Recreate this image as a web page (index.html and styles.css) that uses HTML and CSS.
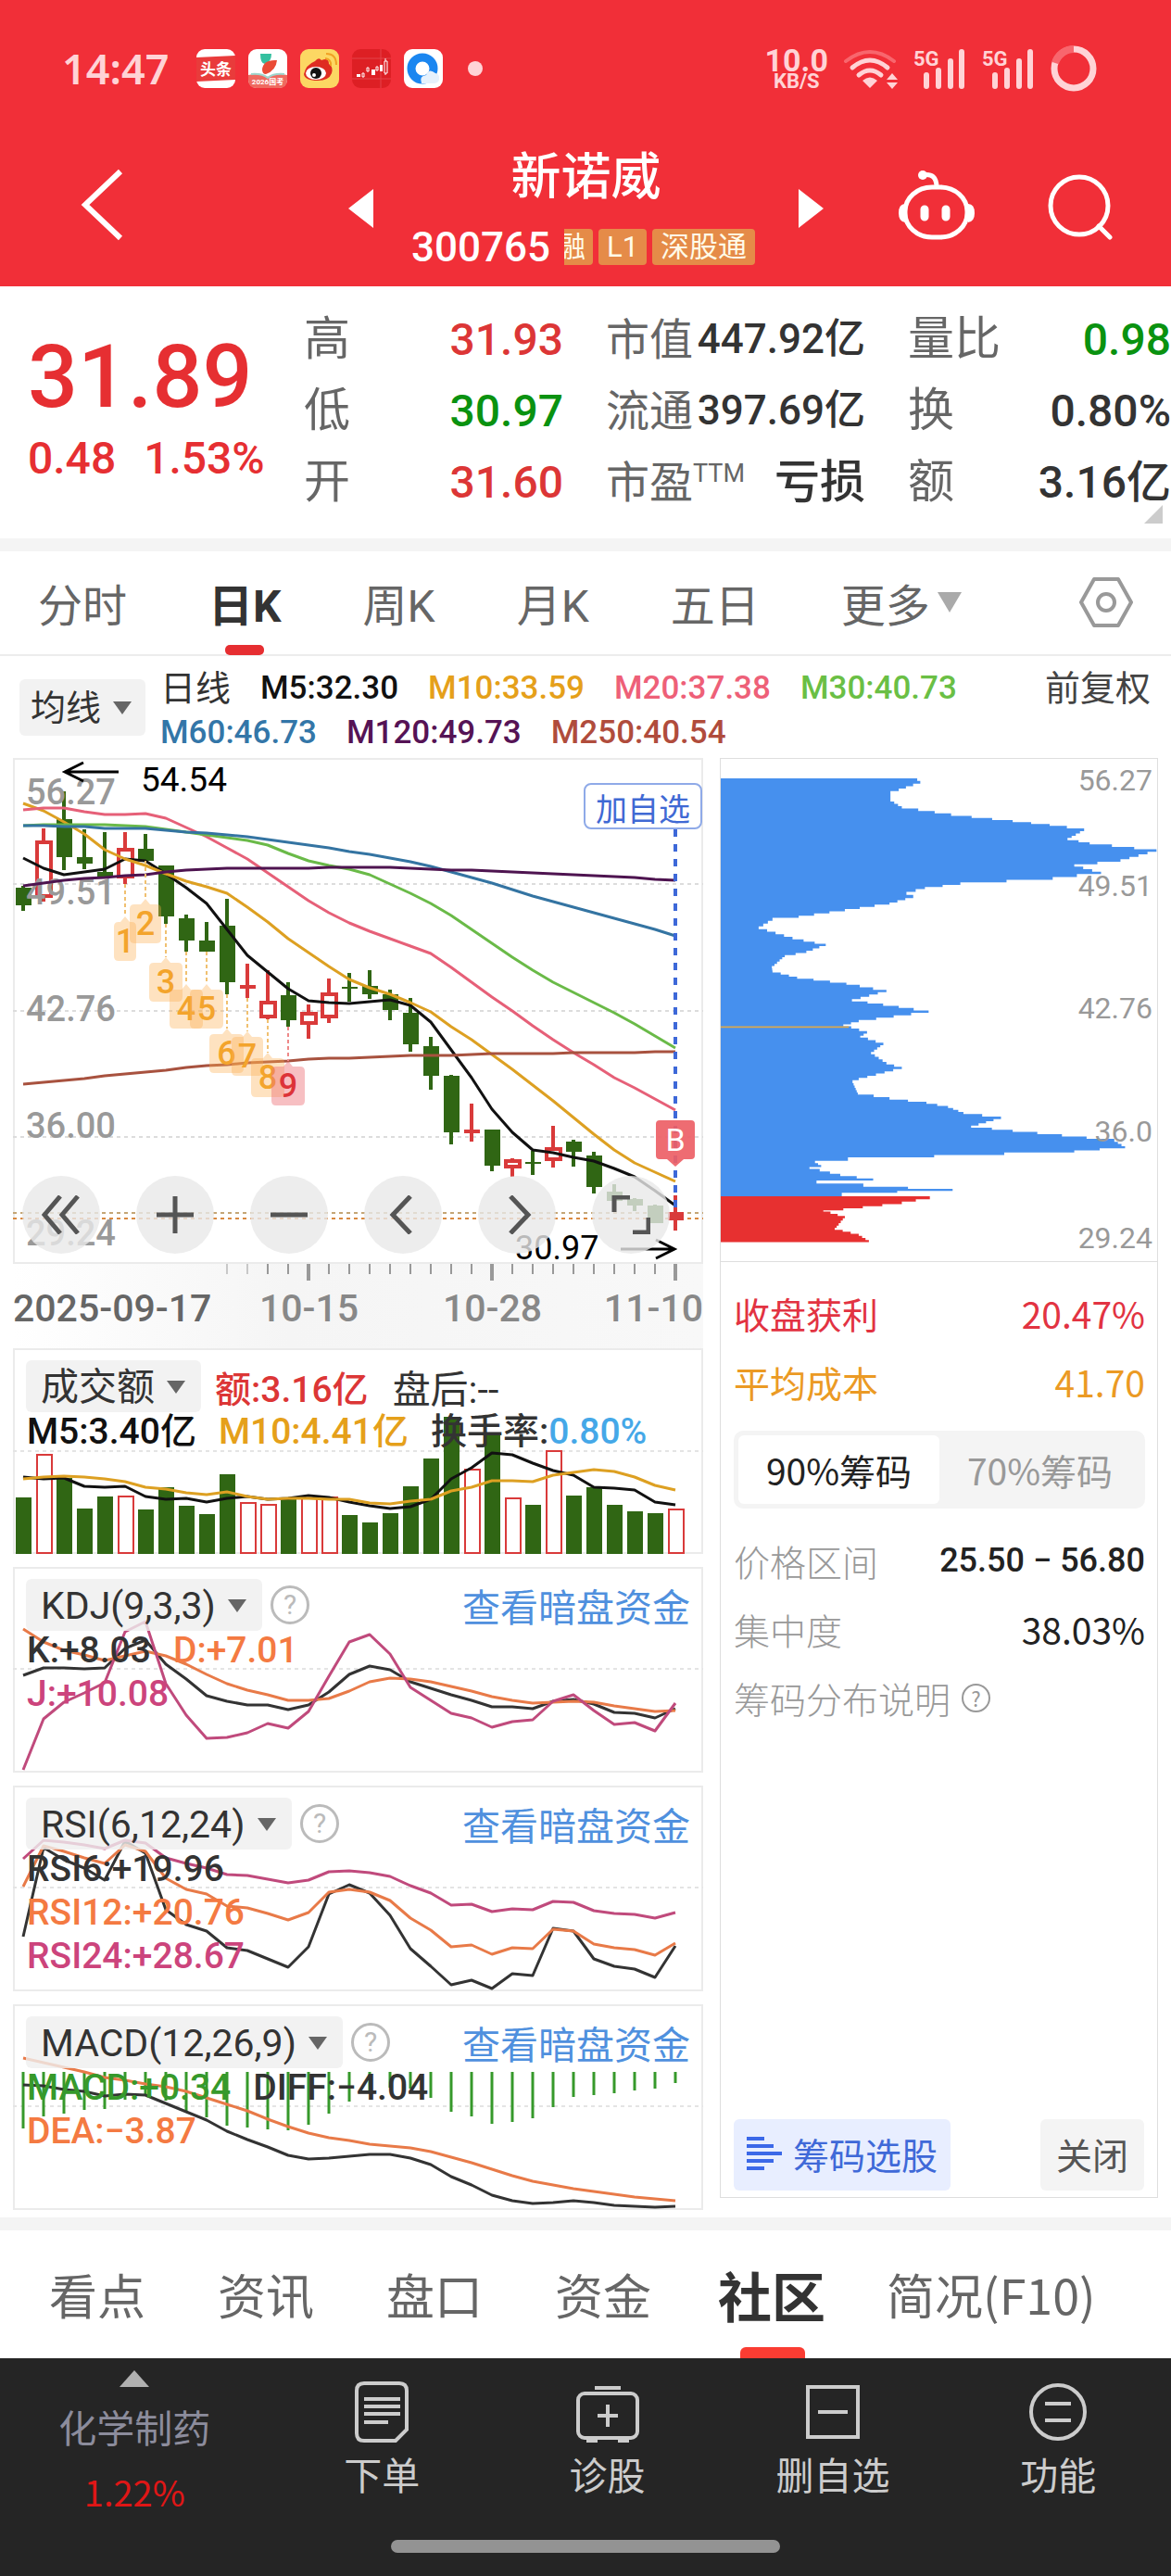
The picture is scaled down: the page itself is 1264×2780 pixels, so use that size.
FILE: index.html
```html
<!DOCTYPE html>
<html lang="zh-CN">
<head>
<meta charset="utf-8">
<meta name="viewport" content="width=device-width">
<title>新诺威 300765</title>
<link rel="stylesheet" href="styles.css">
</head>
<body>
<header class="top">
  <div class="status">
    <span class="clock">14:47</span>
    <div class="apps">
      <svg class="app" viewBox="0 0 42 42"><rect width="42" height="42" rx="9" fill="#fff"/><path d="M0 9l42-2v26l-42 2z" fill="#e93b3b"/><text x="21" y="28" font-size="17" font-weight="700" text-anchor="middle" fill="#fff">头条</text></svg>
      <svg class="app" viewBox="0 0 42 42"><rect width="42" height="42" rx="9" fill="#fff"/><path d="M0 28q12-3 21 2q9-5 21-2v5q0 9-9 9h-24q-9 0-9-9z" fill="#ef6a60"/><path d="M3 27q12-1 18 4q6-5 18-4" fill="none" stroke="#9ed5cc" stroke-width="2"/><path d="M13 5h12q0 9-7 11q-5 0-5-11z" fill="#35c0a0"/><path d="M15 22q1-11 16-10q-1 11-12 15q-4 0-4-5z" fill="#ea4b35"/><text x="21" y="38" font-size="8" font-weight="700" text-anchor="middle" fill="#fff">2026国考</text></svg>
      <svg class="app" viewBox="0 0 42 42"><rect width="42" height="42" rx="9" fill="#fcd763"/><path d="M4 27q2-10 12-14q4-5 7-1q8-3 8 4q5 3 3 10q-3 8-15 8q-14 0-15-7z" fill="#df2c22"/><ellipse cx="17" cy="26" rx="11" ry="7" fill="#fff"/><circle cx="17" cy="26" r="6" fill="#111"/><circle cx="15" cy="28" r="2" fill="#fff"/><path d="M27 10q7 1 6 8M28 5q11 0 11 12" fill="none" stroke="#f0a024" stroke-width="2"/></svg>
      <svg class="app" viewBox="0 0 42 42"><rect width="42" height="42" rx="9" fill="#dd1f24"/><path d="M0 10h42M0 32h42M31 0v42" stroke="#e5454a" stroke-width="1"/><path d="M5 27h4v3h-4zM21 22h4v6h-4zM30 17h3v7h-3z" fill="#fff"/><path d="M11 26h2v4h-2zM16 20h2v4h-2zM26 19h2v4h-2zM35 13h3v13h-3zM36 10v3M36 26v2" fill="none" stroke="#fff" stroke-width="1"/></svg>
      <svg class="app" viewBox="0 0 42 42"><rect width="42" height="42" rx="9" fill="#fff"/><circle cx="20" cy="21" r="12" fill="none" stroke="#1b86f0" stroke-width="9"/><path d="M19 37q-3-8 5-9q3-8 10-2q5 1 4 7q-1 4-6 4z" fill="#e6f1fc"/></svg>
      <i class="more-dot"></i>
    </div>
    <div class="net"><b>10.0</b><small>KB/S</small></div>
    <svg class="wifi" viewBox="0 0 60 44"><g fill="none" stroke="#ffd3d6" stroke-width="5" stroke-linecap="round"><path d="M3 14q26-20 52 0" stroke="#f8666d" stroke-width="4"/><path d="M10 21q19-16 38 0M17 29q12-10 24 0"/></g><path d="M21 35q8-7 16 0l-8 8zM47 34l6-7 6 7zM47 37l6 7 6-7z" fill="#ffd3d6"/></svg>
    <svg class="signal" viewBox="0 0 56 44"><text x="0" y="19" font-size="22" font-weight="700" fill="#ffd3d6">5G</text><path d="M14 29v12M27 24v17M40 14v27M52 4v37" stroke="#ffd3d6" stroke-width="6" stroke-linecap="round"/></svg>
    <svg class="signal" viewBox="0 0 56 44"><text x="0" y="19" font-size="22" font-weight="700" fill="#ffd3d6">5G</text><path d="M14 29v12M27 24v17M40 14v27M52 4v37" stroke="#ffd3d6" stroke-width="6" stroke-linecap="round"/></svg>
    <svg class="battery" viewBox="0 0 50 50"><circle cx="25" cy="25" r="21" fill="none" stroke="#ffd3d6" stroke-width="7"/><path d="M5 19a21 21 0 0 1 20-15" fill="none" stroke="#f8666d" stroke-width="8"/></svg>
  </div>
  <div class="appbar">
    <button class="icon-btn back" aria-label="返回"><svg viewBox="0 0 50 80"><path d="M44 4L6 40l38 36" fill="none" stroke="#fff" stroke-width="6"/></svg></button>
    <button class="icon-btn step" aria-label="上一只"><svg viewBox="0 0 28 42"><path d="M27 0v42L0 21z" fill="#fff"/></svg></button>
    <div class="title">
      <h1>新诺威</h1>
      <div class="code"><span>300765</span><i class="tag cut">融</i><i class="tag">L1</i><i class="tag">深股通</i></div>
    </div>
    <button class="icon-btn step" aria-label="下一只"><svg viewBox="0 0 28 42"><path d="M1 0v42l27-21z" fill="#fff"/></svg></button>
    <button class="icon-btn robot" aria-label="助手"><svg viewBox="0 0 84 78"><g fill="none" stroke="#fff" stroke-width="5"><rect x="8" y="19" width="67" height="54" rx="29" ry="26"/><path d="M27 6q15-3 15 13"/></g><circle cx="27" cy="6" r="5" fill="#fff"/><path d="M8 37q-7 0-7 10q0 9 7 10zM76 37q7 0 7 10q0 9-7 10z" fill="#fff"/><path d="M29 43v8M52 43v8" stroke="#fff" stroke-width="9" stroke-linecap="round"/></svg></button>
    <button class="icon-btn find" aria-label="搜索"><svg viewBox="0 0 72 72"><circle cx="35" cy="35" r="31" fill="none" stroke="#fff" stroke-width="5"/><path d="M56 57l12 12" stroke="#fff" stroke-width="5" stroke-linecap="round"/></svg></button>
  </div>
</header>

<section class="quote">
  <div class="last"><strong>31.89</strong><p><span>0.48</span><span>1.53%</span></p></div>
  <dl><div><dt>高</dt><dd class="up">31.93</dd></div><div><dt>低</dt><dd class="down">30.97</dd></div><div><dt>开</dt><dd class="up">31.60</dd></div></dl>
  <dl class="tight"><div><dt>市值</dt><dd>447.92亿</dd></div><div><dt>流通</dt><dd>397.69亿</dd></div><div><dt>市盈<sup>TTM</sup></dt><dd class="loss">亏损</dd></div></dl>
  <dl><div><dt>量比</dt><dd class="down">0.98</dd></div><div><dt>换</dt><dd>0.80%</dd></div><div><dt>额</dt><dd class="amount">3.16亿</dd></div></dl>
  <svg class="fold" viewBox="0 0 20 20"><path d="M20 0v20H0z" fill="#ccc"/></svg>
</section>

<nav class="periods">
  <button>分时</button><button class="on">日K</button><button>周K</button><button>月K</button><button>五日</button><button aria-haspopup="true">更多<svg class="tri" viewBox="0 0 26 22"><path d="M0 0h26L13 22z" fill="#aaa"/></svg></button>
  <button class="gear" aria-label="设置"><svg viewBox="0 0 58 54"><path d="M16 2h26l14 25-14 25H16L2 27z" fill="none" stroke="#999" stroke-width="4" stroke-linejoin="round"/><circle cx="29" cy="27" r="9" fill="none" stroke="#999" stroke-width="4"/></svg></button>
</nav>

<section class="legend">
  <label class="pick"><select aria-label="均线"><option>均线</option></select><svg class="arrow" viewBox="0 0 20 14"><path d="M0 0h20L10 14z"/></svg></label>
  <div class="ma">
    <p><span class="kind">日线</span><span class="k">M5:32.30</span><span class="o">M10:33.59</span><span class="p">M20:37.38</span><span class="g">M30:40.73</span></p>
    <p><span class="b">M60:46.73</span><span class="v">M120:49.73</span><span class="r">M250:40.54</span></p>
  </div>
  <span class="adjust">前复权</span>
</section>

<main class="board">
  <div class="charts">
    <div class="panel kline">
      <svg id="kline" viewBox="14 818 745 546"></svg>
      <button class="add">加自选</button>
      <div class="tools">
        <button aria-label="最早"><svg viewBox="0 0 42 42"><path d="M20 1L3 21l17 20M39 1L22 21l17 20"/></svg></button>
        <button aria-label="放大"><svg viewBox="0 0 42 42"><path d="M21 1v40M1 21h40"/></svg></button>
        <button aria-label="缩小"><svg viewBox="0 0 42 42"><path d="M1 21h40"/></svg></button>
        <button aria-label="左移"><svg viewBox="0 0 42 42"><path d="M29 1L10 21l19 20"/></svg></button>
        <button aria-label="右移"><svg viewBox="0 0 42 42"><path d="M14 1l19 20-19 20"/></svg></button>
        <button aria-label="全屏"><svg viewBox="0 0 42 42"><path d="M3 18V2h17M40 24v16H23"/></svg></button>
      </div>
    </div>
    <div class="axis">
      <svg id="ticks" viewBox="14 1364 745 20"></svg>
      <p><span>2025-09-17</span><span>10-15</span><span>10-28</span><span>11-10</span></p>
    </div>
    <div class="panel">
      <svg id="volume" viewBox="14 1455 745 222"></svg>
      <div class="info">
        <div class="head"><label class="pick"><select aria-label="成交额"><option>成交额</option></select><svg class="arrow" viewBox="0 0 20 14"><path d="M0 0h20L10 14z"/></svg></label><span class="up">额:3.16亿</span><span class="after">盘后:--</span></div>
        <p><span class="k">M5:3.40亿</span><span class="o">M10:4.41亿</span><span>换手率:<span class="sky">0.80%</span></span></p>
      </div>
    </div>
    <div class="panel">
      <svg id="kdj" viewBox="14 1692 745 222"></svg>
      <div class="info">
        <div class="head"><label class="pick"><select aria-label="KDJ"><option>KDJ(9,3,3)</option></select><svg class="arrow" viewBox="0 0 20 14"><path d="M0 0h20L10 14z"/></svg></label><button class="help" aria-label="说明">?</button><a href="#funds">查看暗盘资金</a></div>
        <p><span>K:+8.03</span><span class="d">D:+7.01</span></p>
        <p><span class="m">J:+10.08</span></p>
      </div>
    </div>
    <div class="panel">
      <svg id="rsi" viewBox="14 1928 745 222"></svg>
      <div class="info">
        <div class="head"><label class="pick"><select aria-label="RSI"><option>RSI(6,12,24)</option></select><svg class="arrow" viewBox="0 0 20 14"><path d="M0 0h20L10 14z"/></svg></label><button class="help" aria-label="说明">?</button><a href="#funds">查看暗盘资金</a></div>
        <p><span>RSI6:+19.96</span></p>
        <p><span class="d">RSI12:+20.76</span></p>
        <p><span class="m">RSI24:+28.67</span></p>
      </div>
    </div>
    <div class="panel">
      <svg id="macd" viewBox="14 2164 745 222"></svg>
      <div class="info">
        <div class="head"><label class="pick"><select aria-label="MACD"><option>MACD(12,26,9)</option></select><svg class="arrow" viewBox="0 0 20 14"><path d="M0 0h20L10 14z"/></svg></label><button class="help" aria-label="说明">?</button><a href="#funds">查看暗盘资金</a></div>
        <p><span class="gr">MACD:+0.34</span><span>DIFF:−4.04</span></p>
        <p><span class="d">DEA:−3.87</span></p>
      </div>
    </div>
  </div>

  <aside class="chips">
    <div class="spread">
      <svg id="spread" viewBox="52 265 1417 1216" preserveAspectRatio="none"></svg>
      <div class="scale"><span>56.27</span><span>49.51</span><span>42.76</span><span>36.0</span><span>29.24</span></div>
    </div>
    <div class="stats">
      <div class="row gain"><span>收盘获利</span><span>20.47%</span></div>
      <div class="row cost"><span>平均成本</span><span>41.70</span></div>
      <div class="seg"><button aria-pressed="true">90%筹码</button><button aria-pressed="false">70%筹码</button></div>
      <div class="row"><span>价格区间</span><b class="range">25.50 − 56.80</b></div>
      <div class="row"><span>集中度</span><b>38.03%</b></div>
      <div class="row note"><span>筹码分布说明</span><button class="help" aria-label="说明">?</button></div>
    </div>
    <div class="acts">
      <button class="select"><svg viewBox="0 0 38 38"><path d="M0 3h19M0 11h29M0 19h38M0 27h29M0 35h19" stroke="#3b68e8" stroke-width="4"/></svg>筹码选股</button>
      <button class="shut">关闭</button>
    </div>
  </aside>
</main>

<nav class="sections">
  <a href="#view">看点</a><a href="#news">资讯</a><a href="#order">盘口</a><a href="#funds">资金</a><a href="#talk" class="on">社区</a><a href="#f10">简况(F10)</a>
</nav>

<footer class="dock">
  <nav>
    <button class="sector"><svg viewBox="0 0 32 18"><path d="M16 0l16 18H0z" fill="#b0b0b0"/></svg><span>化学制药</span><b>1.22%</b></button>
    <button><svg viewBox="0 0 68 66"><path d="M15 2h38q8 0 8 8v42L49 64H15q-8 0-8-8V10q0-8 8-8z"/><path d="M15 19h39M15 27h39M15 35h39M15 44h26"/></svg>下单</button>
    <button><svg viewBox="0 0 68 66"><rect x="2" y="13" width="64" height="48" rx="7"/><path d="M20 7h28M34 25v24M23 37h22M11 64h12M45 64h12"/></svg>诊股</button>
    <button><svg viewBox="0 0 68 66"><path d="M7 6h54v54H7zM18 33h32"/></svg>删自选</button>
    <button><svg viewBox="0 0 68 66"><circle cx="34" cy="33" r="29"/><path d="M20 24h28M20 42h28"/></svg>功能</button>
  </nav>
  <i class="home"></i>
</footer>
<script src="charts.js"></script>
</body>
</html>
```
FILE: styles.css
```css
* { box-sizing: border-box; margin: 0; padding: 0; }
body { font-family: Roboto, "Noto Sans CJK SC", sans-serif; color: #333; background: #fff; }
button, select { font: inherit; color: inherit; border: 0; background: none; appearance: none; white-space: nowrap; }
a { color: inherit; text-decoration: none; }
i { font-style: normal; }
svg { display: block; flex: none; }

.top { background: #f12f38; height: 309px; color: #fff; }
.status { display: flex; align-items: center; padding: 48px 80px 0 67px; height: 100px; color: #ffd3d6; }
.clock { font: 600 45px/52px "Noto Sans", sans-serif; width: 145px; }
.apps { display: flex; align-items: center; gap: 14px; margin-right: auto; }
.app { width: 42px; height: 42px; }
.more-dot { width: 16px; height: 16px; border-radius: 50%; background: #ffd3d6; margin-left: 13px; }
.net { display: grid; justify-items: center; margin-right: 16px; }
.net b { font-size: 34px; line-height: 28px; }
.net small { font-size: 22px; line-height: 18px; font-weight: 700; }
.wifi { width: 60px; height: 44px; margin-right: 16px; }
.signal { width: 56px; height: 44px; margin-right: 18px; overflow: visible; }
.battery { width: 50px; height: 50px; }

.appbar { display: flex; align-items: flex-start; padding: 0 62px 0 86px; }
.icon-btn svg { width: 100%; }
.back { width: 50px; margin: 81px 240px 0 0; }
.step { width: 28px; margin-top: 104px; }
.title { flex: 1; display: grid; justify-items: center; padding-top: 62px; }
h1 { font-size: 54px; line-height: 60px; font-weight: 500; }
.code { display: flex; align-items: center; font-size: 44px; font-weight: 500; height: 39px; margin-top: 25px; }
.code span { margin-right: 15px; }
.tag { background: #e58b48; color: #fffbe8; font-size: 31px; line-height: 39px; font-weight: 400; padding: 0 9px; border-radius: 4px; margin-right: 6px; }
.cut { width: 31px; padding: 0 8px 0 0; display: flex; justify-content: flex-end; overflow: hidden; border-radius: 0 4px 4px 0; }
.robot { width: 84px; margin: 83px 0 0 80px; }
.find { width: 72px; margin: 87px 0 0 77px; }

.quote { display: grid; grid-template-columns: 252fr 280fr 280fr 284fr; column-gap: 46px; padding: 19px 0 22px 30px; border-bottom: 14px solid #f4f4f4; position: relative; font-weight: 500; }
.quote > * { min-width: 0; }
.last { color: #e62f32; padding-top: 31px; white-space: nowrap; }
.last strong { display: block; font-size: 95px; line-height: 96px; font-weight: 500; }
.last p { display: flex; gap: 30px; font-size: 48px; line-height: 60px; margin-top: 10px; }
.quote dl div { display: flex; justify-content: space-between; align-items: center; height: 77px; font-size: 48px; line-height: 77px; white-space: nowrap; }
dt { color: #666; font-weight: 400; font-size: 50px; }
dt sup { font-size: 27px; line-height: 1px; }
.up { color: #dc3636; }
.down { color: #0a9210; }
.tight dt { font-size: 47px; }
.tight dd { font-size: 44px; }
.tight .loss { font-size: 49px; }
.fold { position: absolute; right: 9px; bottom: 16px; width: 20px; }

.periods { display: flex; align-items: center; gap: 88px; height: 113px; padding: 0 41px; border-bottom: 2px solid #ececec; font-size: 48px; color: #666; }
.periods button { height: 108px; padding-bottom: 1px; display: flex; align-items: center; position: relative; }
.periods .on, .sections .on { color: #333; font-weight: 700; }
.periods .on::after { content: ""; position: absolute; left: 18px; bottom: -2px; width: 42px; height: 11px; border-radius: 5px; background: #e62e31; }
.tri { width: 26px; margin-left: 8px; }
.gear { margin-left: auto; }
.gear svg { width: 58px; }

.legend { display: flex; padding: 11px 22px 0 21px; height: 110px; }
.pick { display: flex; align-items: center; background: rgba(239, 239, 239, .8); border-radius: 6px; color: #333; }
.arrow { width: 20px; fill: #666; }
.legend .pick { height: 61px; margin-top: 14px; padding: 0 15px 0 12px; font-size: 38px; gap: 12px; }
.ma { margin-left: 16px; font-size: 35px; font-weight: 500; }
.ma p { display: flex; gap: 32px; line-height: 48px; white-space: nowrap; }
.ma .kind { font-weight: 400; font-size: 38px; }
.adjust { margin-left: auto; font-size: 38px; line-height: 48px; color: #444; }
.k { color: #111; } .o { color: #e5a01a; } .p { color: #ee6078; } .g { color: #6abf45; }
.b { color: #3376a8; } .v { color: #551355; } .r { color: #b04c3c; }
.d { color: #f47a42; } .m { color: #cc447c; } .gr { color: #36992b; } .sky { color: #45a8e8; }

.board { display: grid; grid-template-columns: 745fr 473fr; column-gap: 18px; padding: 0 14px 8px; border-bottom: 14px solid #f4f4f4; }
.charts { display: grid; row-gap: 14px; }
.panel { display: grid; box-shadow: inset 0 0 0 2px #ebebeb; position: relative; }
.panel > * { grid-area: 1 / 1; min-width: 0; }
.panel > svg { width: 100%; }
.kline { margin-bottom: -14px; }
.add { position: absolute; right: 1px; top: 27px; height: 50px; padding: 0 11px; font-size: 34px; color: #3f69d4; background: #fff; border: 2px solid #8faae8; border-radius: 8px; }
.tools { position: absolute; left: 10px; bottom: 11px; display: flex; gap: 39px; }
.tools button { width: 84px; height: 84px; border-radius: 50%; background: rgba(232, 232, 232, .8); display: grid; place-items: center; }
.tools svg { width: 42px; fill: none; stroke: #555; stroke-width: 5; }
.axis { height: 91px; margin-bottom: -14px; background: linear-gradient(90deg, #fff, #f5f5f5 40%, #f8f8f8); }
.axis svg { width: 100%; }
.axis p { display: grid; grid-template-columns: 266fr 198fr 168fr 113fr; font-size: 41px; line-height: 48px; font-weight: 500; color: #888; padding-top: 4px; white-space: nowrap; }
.axis span:first-child { color: #666; }
.axis span:last-child { text-align: right; }

.info { padding: 13px 14px 0; font-size: 39px; position: relative; }
.info .head { display: flex; align-items: center; height: 56px; margin-bottom: -2px; font-size: 41px; }
.info .pick { height: 56px; padding: 2px 17px 0 16px; gap: 13px; }
.info .up { margin-left: 15px; font-weight: 500; font-size: 39px; }
.info .after { margin-left: 26px; }
.info a { margin-left: auto; color: #4f90de; }
.info p { display: flex; gap: 24px; line-height: 47px; padding-left: 1px; font-weight: 500; white-space: nowrap; }
.help { width: 42px; height: 42px; border: 3px solid #bbb; border-radius: 50%; color: #bbb; font-size: 30px; line-height: 34px; margin-left: 9px; }

.chips { border: 1px solid #dedede; margin-bottom: 13px; display: flex; flex-direction: column; font-family: "Noto Sans CJK SC", sans-serif; }
.spread { position: relative; height: 543px; border-bottom: 1px solid #dedede; }
.spread svg { width: 100%; height: 100%; }
.scale { position: absolute; inset: 4px 5px 0 auto; display: grid; grid-template-rows: 114fr 132fr 133fr 115fr 44fr; font: 32px/38px Roboto, sans-serif; color: #999; text-align: right; }
.stats { padding: 18px 13px 0 14px; font-size: 39px; }
.row { display: flex; justify-content: space-between; align-items: center; height: 74px; color: #999; }
.row span:first-child { font-weight: 300; }
.row b { font-weight: 400; color: #222; font-size: 39px; }
.row .range { font: 500 36px/74px Roboto, sans-serif; }
.gain { color: #e23342; } .cost { color: #eb9a24; }
.row.gain span, .row.cost span { font-weight: 400; }
.note { justify-content: flex-start; }
.note .help { width: 31px; height: 31px; border-width: 2px; border-color: #999; color: #999; font-size: 22px; line-height: 26px; margin-left: 12px; }
.seg { display: flex; background: #f4f4f4; border-radius: 10px; padding: 5px; height: 84px; margin: 16px 0 19px; }
.seg button { flex: 1; color: #999; border-radius: 6px; font-size: 39px; }
.seg button[aria-pressed="true"] { background: #fff; color: #222; }
.acts { display: flex; justify-content: space-between; margin: auto 14px 7px; }
.acts button { height: 77px; border-radius: 6px; font-size: 39px; line-height: 74px; padding-bottom: 3px; display: flex; align-items: center; }
.acts .select { background: #e8eeff; color: #3f69d8; padding-left: 14px; padding-right: 14px; gap: 12px; }
.select svg { width: 38px; }
.acts .shut { background: #f4f4f4; color: #555; padding-left: 17px; padding-right: 17px; }

.sections { display: flex; align-items: center; gap: 78px; height: 138px; padding-left: 53px; font: 52px/138px "Noto Sans CJK SC", sans-serif; color: #666; white-space: nowrap; }
.sections .on { font-size: 58px; position: relative; margin: 0 -12px 0 -6px; }
.sections .on::after { content: ""; position: absolute; left: 24px; bottom: 0; width: 70px; height: 12px; border-radius: 6px 6px 0 0; background: #fa3c32; }

.dock { background: #252525; color: #ccc; height: 235px; }
.dock nav { display: grid; grid-template-columns: 290fr 243fr 243fr 243fr 243fr; height: 196px; font-family: "Noto Sans CJK SC", sans-serif; }
.dock button { display: flex; flex-direction: column; align-items: center; font-size: 41px; line-height: 50px; padding-top: 25px; gap: 8px; }
.dock button svg { width: 68px; fill: none; stroke: #ccc; stroke-width: 4; }
.dock .sector { padding-top: 13px; gap: 17px; color: #8c8c9c; }
.dock .sector svg { width: 32px; stroke: none; }
.sector b { color: #e01616; font-size: 38px; font-weight: 400; margin-top: 4px; }
.home { display: block; width: 420px; height: 14px; border-radius: 7px; background: #939393; margin: 0 auto; }
```
FILE: charts.js
```js
const GREEN = '#306614', RED = '#d93a3a';
const X = i => 25 + 22 * i;

function add(id, name, attrs, text) {
  const el = document.createElementNS('http://www.w3.org/2000/svg', name);
  for (const k in attrs) el.setAttribute(k, attrs[k]);
  if (text) el.textContent = text;
  document.getElementById(id).appendChild(el);
}
function path(id, d, stroke, width, extra) {
  add(id, 'path', Object.assign({ d, stroke, 'stroke-width': width, fill: 'none' }, extra));
}
function line(id, ys, color, width = 4) {
  path(id, 'M' + ys.map((y, i) => X(i) + ' ' + y).join('L'), color, width, { 'stroke-linejoin': 'round' });
}
function rule(id, y, color = '#dcdcdc', width = 2) {
  path(id, `M14 ${y}H759`, color, width, { 'stroke-dasharray': '4 4' });
}

/* Candles: colour, body top, body bottom, high, low */
const candles = [
  ['g',958,977,956,983],['r',907,968,894,973],['g',884,925,854,939],['g',925,932,895,938],['g',941,947,898,948],
  ['r',915,947,898,954],['g',916,929,900,929],['g',934,989,934,997],['g',991,1015,987,1027],['g',1015,1027,995,1027],
  ['g',999,1060,970,1073],['r',1063,1067,1040,1077],['r',1080,1098,1047,1100],['g',1074,1101,1060,1108],['r',1092,1105,1084,1121],
  ['r',1071,1098,1056,1104],['g',1065,1067,1050,1081],['g',1064,1073,1047,1078],['g',1073,1090,1068,1101],['g',1093,1127,1077,1135],
  ['g',1129,1161,1119,1176],['g',1161,1222,1160,1235],['r',1219,1223,1191,1232],['g',1219,1258,1219,1264],['r',1251,1260,1250,1270],
  ['g',1254,1256,1242,1268],['r',1238,1252,1215,1260],['g',1232,1243,1230,1259],['g',1247,1281,1243,1288],['g',1286,1296,1278,1296],
  ['g',1294,1301,1293,1307],['g',1301,1320,1300,1320],['r',1308,1317,1290,1328]
];
[954, 1091, 1227].forEach(y => rule('kline', y));
rule('kline', 1309, '#c4a676');
rule('kline', 1315, '#d98940');
candles.forEach(([c, top, bottom, high, low], i) => {
  const x = X(i), color = c === 'g' ? GREEN : RED;
  path('kline', `M${x} ${high}V${top}M${x} ${bottom}V${low}`, color, 4);
  const hollow = c === 'r' && bottom - top > 8 && i < 32;
  add('kline', 'rect', hollow
    ? { x: x - 7, y: top + 2, width: 15, height: bottom - top - 3, fill: '#fff', stroke: color, 'stroke-width': 4 }
    : { x: x - 8, y: top, width: 17, height: bottom - top, fill: color });
});
[['56.27',868],['49.51',976],['42.76',1102],['36.00',1228],['29.24',1344]].forEach(([t, y]) =>
  add('kline', 'text', { x: 28, y, 'font-size': 38, 'font-weight': 500, fill: '#999' }, t));

line('kline', [926,937,944,941,938,927,929,943,958,975,1003,1031,1049,1067,1080,1082,1083,1081,1079,1085,1103,1133,1163,1197,1222,1241,1244,1249,1253,1261,1270,1285,1301], '#111', 3);
line('kline', [867,875,887,900,917,927,934,943,951,957,964,979,995,1013,1028,1043,1057,1066,1073,1082,1092,1108,1122,1138,1154,1171,1188,1206,1224,1241,1255,1265,1275], '#dda022', 3);
line('kline', [874,872,872,876,879,879,878,883,893,903,915,927,942,957,972,985,996,1005,1013,1021,1029,1044,1060,1076,1091,1107,1122,1136,1149,1163,1174,1186,1198], '#e66078', 3);
line('kline', [891,890,890,890,890,891,892,895,898,901,904,907,912,921,929,934,938,944,954,964,975,988,1003,1018,1033,1047,1060,1071,1082,1093,1105,1118,1131], '#6aba48', 3);
line('kline', [891,891,892,892,894,894,894,896,898,899,901,903,906,909,912,915,919,922,926,930,935,941,947,953,960,967,973,979,985,991,997,1003,1010], '#3474a2', 3);
line('kline', [956,953,950,948,947,945,944,941,939,938,937,937,937,937,937,936,936,936,936,937,938,939,939,940,941,942,943,944,945,946,947,949,950], '#4e1450', 3);
line('kline', [1170,1168,1166,1164,1161,1159,1157,1155,1152,1150,1149,1147,1146,1145,1143,1142,1142,1141,1140,1139,1139,1139,1138,1137,1137,1137,1137,1136,1136,1136,1136,1135,1135], '#a8523f', 3);

/* Numbered signal tags: left, right, tip, candle low */
[[123,147,989,954],[140,174,970,929],[161,197,1033,997],[183,219,1062,1027],[205,241,1062,1027],
 [226,263,1110,1073],[250,284,1113,1077],[271,307,1136,1100],[293,329,1145,1108]].forEach(([l, r, tip, low], n) => {
  const x = X(n + 5), last = n === 8, y = tip + 6;
  path('kline', `M${x} ${low}V${tip}`, last ? '#e88' : '#f0c070', 2, { 'stroke-dasharray': '4 3' });
  add('kline', 'path', { d: `M${l + 5} ${y}H${x - 5}L${x} ${tip}L${x + 5} ${y}H${r - 5}q5 0 5 5v32q0 5-5 5H${l + 5}q-5 0-5-5v-32q0-5 5-5z`, fill: last ? '#ee7078' : '#fcb050', 'fill-opacity': last ? .45 : .36 });
  add('kline', 'text', { x: (l + r) / 2, y: tip + 39, 'font-size': 36, 'font-weight': 500, 'text-anchor': 'middle', fill: last ? '#dd3338' : '#f3a42c' }, String(n + 1));
});
path('kline', 'M729 895V1310', '#3d68d8', 4, { 'stroke-dasharray': '8 8' });
path('kline', 'M128 833H70M90 823L70 833L90 843', '#000', 3);
add('kline', 'text', { x: 152, y: 854, 'font-size': 37, fill: '#000' }, '54.54');
path('kline', 'M670 1348H728M708 1338L728 1348L708 1358', '#000', 3);
add('kline', 'text', { x: 556, y: 1359, 'font-size': 36, fill: '#000' }, '30.97');
add('kline', 'path', { d: 'M712 1209h34q4 0 4 4v34q0 4-4 4h-8l-9 8-9-8h-8q-4 0-4-4v-34q0-4 4-4z', fill: '#ed5f66', 'fill-opacity': .92 });
add('kline', 'text', { x: 729, y: 1242, 'font-size': 34, 'text-anchor': 'middle', fill: '#fff' }, 'B');

for (let i = 10; i < 33; i++) {
  const major = i % 9 === 5;
  path('ticks', `M${X(i)} 1364V${major ? 1382 : 1375}`, '#999', major ? 4 : 2, { opacity: i < 12 ? .5 : 1 });
}

rule('volume', 1566, '#e4e4e4');
const redDays = [1, 5, 11, 12, 14, 15, 22, 24, 26, 32];
[1616,1569,1595,1628,1615,1614,1629,1605,1625,1634,1591,1621,1623,1618,1616,1615,1635,1643,1633,1604,1574,1529,1585,1546,1616,1624,1565,1614,1605,1624,1631,1633,1628].forEach((y, i) => {
  add('volume', 'rect', redDays.includes(i)
    ? { x: X(i) - 7, y: y + 1, width: 16, height: 1675 - y, fill: '#fff', stroke: RED, 'stroke-width': 2 }
    : { x: X(i) - 8, y, width: 17, height: 1677 - y, fill: GREEN });
});
line('volume', [1594,1596,1595,1604,1605,1604,1615,1618,1617,1621,1617,1615,1618,1617,1614,1616,1621,1625,1628,1626,1618,1596,1584,1568,1570,1579,1587,1592,1605,1606,1608,1621,1624], '#111', 3);
line('volume', [1596,1594,1593,1594,1596,1599,1605,1607,1611,1613,1610,1615,1618,1617,1617,1618,1618,1622,1623,1620,1618,1609,1605,1598,1598,1599,1592,1589,1586,1588,1594,1603,1608], '#dda022', 3);

rule('kdj', 1802, '#e4e4e4');
line('kdj', [1809,1801,1801,1802,1801,1780,1771,1797,1813,1831,1837,1841,1841,1846,1841,1827,1808,1799,1803,1816,1823,1830,1836,1843,1843,1845,1837,1835,1840,1849,1850,1855,1845], '#333', 3);
line('kdj', [1759,1773,1782,1787,1793,1788,1783,1788,1797,1808,1818,1825,1830,1836,1836,1834,1826,1816,1812,1813,1816,1821,1826,1832,1836,1839,1838,1837,1838,1842,1845,1848,1847], '#e87a48', 3);
line('kdj', [1911,1856,1838,1828,1817,1762,1751,1818,1852,1877,1876,1871,1861,1866,1848,1810,1773,1765,1786,1822,1836,1850,1855,1865,1859,1857,1837,1830,1847,1862,1860,1869,1839], '#c04a7c', 3);

rule('rsi', 2038, '#e4e4e4');
line('rsi', [2091,1995,2008,2017,2030,1988,2001,2062,2078,2085,2103,2106,2115,2124,2102,2045,2035,2044,2068,2104,2123,2143,2138,2147,2131,2133,2082,2085,2115,2123,2126,2135,2101], '#333', 3);
line('rsi', [2037,1993,1999,2006,2012,1992,1999,2028,2040,2045,2058,2060,2066,2073,2065,2043,2040,2043,2052,2071,2084,2102,2100,2110,2103,2104,2083,2085,2099,2103,2105,2111,2098], '#e87a48', 3);
line('rsi', [2007,1987,1989,1992,1996,1987,1990,2006,2012,2017,2024,2025,2029,2033,2030,2021,2020,2022,2026,2036,2044,2057,2056,2064,2061,2062,2053,2054,2063,2066,2067,2071,2065], '#c04a7c', 3);

rule('macd', 2274, '#e4e4e4');
[2298,2285,2282,2278,2277,2267,2263,2268,2280,2286,2295,2297,2299,2300,2294,2282,2269,2259,2254,2255,2265,2280,2285,2293,2291,2287,2275,2264,2262,2260,2257,2255,2249].forEach((y, i) =>
  path('macd', `M${X(i)} 2237V${y}`, '#36992b', 3));
line('macd', [2251,2252,2256,2258,2263,2261,2262,2271,2280,2289,2301,2310,2318,2327,2331,2330,2328,2326,2326,2330,2337,2350,2359,2370,2376,2379,2378,2376,2378,2381,2382,2383,2382], '#333', 3);
line('macd', [2222,2227,2232,2237,2243,2246,2250,2253,2258,2265,2272,2279,2288,2296,2303,2308,2311,2315,2317,2319,2323,2329,2335,2342,2349,2355,2359,2363,2366,2369,2372,2374,2376], '#e87a48', 3);

/* Chip distribution, drawn as a stack of thin bars between the outline points */
function chips(points, color) {
  let d = `M52 ${points[0][1]}`;
  for (let n = 1; n < points.length; n++) {
    const [x0, y0] = points[n - 1], [x1, y1] = points[n];
    const steps = Math.max(1, Math.round((y1 - y0) / 6));
    for (let s = 1; s <= steps; s++) d += `H${x0 + (x1 - x0) * s / steps}V${y0 + (y1 - y0) * s / steps}`;
  }
  add('spread', 'path', { d: d + 'H52z', fill: color });
}
chips([[680,312],[700,325],[630,343],[603,350],[603,368],[640,385],[800,403],[1000,418],[1120,427],[1232,440],[1178,462],[1250,472],[1467,490],[1350,514],[1200,526],[1287,544],[1130,558],[830,570],[715,580],[655,594],[677,602],[600,618],[455,634],[305,650],[220,657],[175,677],[285,702],[393,718],[330,735],[260,745],[218,772],[220,782],[300,797],[460,812],[590,830],[478,852],[630,868],[727,880],[500,903],[450,912],[527,930],[505,940],[580,958],[540,980],[590,1005],[640,1016],[500,1043],[480,1050],[497,1078],[600,1090],[720,1100],[790,1110],[840,1125],[962,1137],[865,1158],[1000,1168],[1240,1185],[1330,1192],[1365,1208],[1200,1218],[745,1230],[465,1238],[358,1244],[378,1253],[340,1258],[440,1275],[547,1286],[363,1293],[515,1301],[805,1311],[445,1320],[445,1324]], '#4690ee');
chips([[615,1324],[731,1331],[640,1343],[450,1358],[385,1361],[455,1377],[435,1395],[422,1405],[500,1420],[533,1435]], '#e73030');
path('spread', 'M52 914H468', '#d8a850', 4);
```
